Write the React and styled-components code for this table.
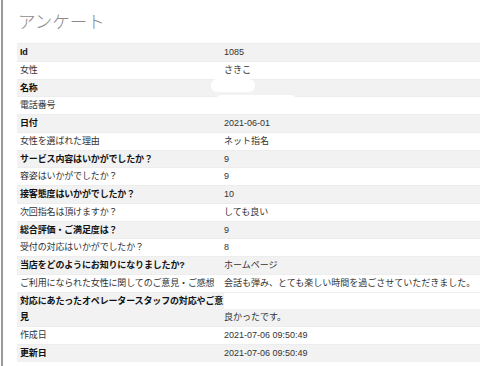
import React from "react";
import styled, { createGlobalStyle } from "styled-components";

const Global = createGlobalStyle`
  html, body { margin: 0; padding: 0; background: #fff; }
  body { font-family: "Liberation Sans", "Noto Sans CJK JP", sans-serif; overflow: hidden; }
`;

const Page = styled.div`
  margin-left: 1px;
  border-left: 2px solid #9a9a9a;
  padding: 0 0 0 14px;
  min-height: 366px;
  box-sizing: border-box;
`;

const Title = styled.h1`
  margin: 0 0 10px 1px;
  padding-top: 9px;
  font-family: "Noto Sans CJK JP", sans-serif;
  font-weight: 300;
  font-size: 17.5px;
  line-height: 24px;
  color: #8a8a8a;
`;

const Table = styled.div`
  display: flex;
  flex-direction: column;
`;

const Row = styled.div`
  display: grid;
  grid-template-columns: 207px 1fr;
  align-items: ${(p) => (p.$tall ? "end" : "stretch")};
  border-top: 1px solid #ededed;
  min-height: 17.75px;
  box-sizing: border-box;
  font-size: 9px;
  line-height: 16.75px;
`;

const Label = styled.div`
  padding-left: 3px;
  align-self: stretch;
  background: ${(p) => (p.$striped ? "#f2f2f2" : "transparent")};
  font-weight: ${(p) => (p.$striped ? 700 : 400)};
  color: ${(p) => (p.$striped ? "#111" : "#333")};
  letter-spacing: -0.15px;
`;

const Value = styled.div`
  position: relative;
  background: ${(p) => (p.$striped ? "#f2f2f2" : "transparent")};
  color: #333;
  white-space: nowrap;
`;

const Redact = styled.span`
  position: absolute;
  left: ${(p) => p.$left}px;
  top: ${(p) => p.$top}px;
  width: ${(p) => p.$w}px;
  height: ${(p) => p.$h}px;
  border-radius: 6px;
  background: #fff;
`;

const rows = [
  ["Id", "1085"],
  ["女性", "さきこ"],
  ["名称", "", { left: -13, top: -1, w: 44, h: 13 }],
  ["電話番号", "", { left: -9, top: -2, w: 82, h: 14 }],
  ["日付", "2021-06-01"],
  ["女性を選ばれた理由", "ネット指名"],
  ["サービス内容はいかがでしたか？", "9"],
  ["容姿はいかがでしたか？", "9"],
  ["接客態度はいかがでしたか？", "10"],
  ["次回指名は頂けますか？", "しても良い"],
  ["総合評価・ご満足度は？", "9"],
  ["受付の対応はいかがでしたか？", "8"],
  ["当店をどのようにお知りになりましたか?", "ホームページ"],
  ["ご利用になられた女性に関してのご意見・ご感想", "会話も弾み、とても楽しい時間を過ごさせていただきました。"],
  ["対応にあたったオペレータースタッフの対応やご意見", "良かったです。", null, true],
  ["作成日", "2021-07-06 09:50:49"],
  ["更新日", "2021-07-06 09:50:49"],
];

export default function App() {
  return (
    <>
      <Global />
      <Page>
        <Title>アンケート</Title>
        <Table>
          {rows.map(([label, value, redact, tall], i) => {
            const striped = i % 2 === 0;
            return (
              <Row key={label} $tall={tall}>
                <Label $striped={striped}>{label}</Label>
                <Value $striped={striped}>
                  {value}
                  {redact && (
                    <Redact $left={redact.left} $top={redact.top} $w={redact.w} $h={redact.h} />
                  )}
                </Value>
              </Row>
            );
          })}
        </Table>
      </Page>
    </>
  );
}
